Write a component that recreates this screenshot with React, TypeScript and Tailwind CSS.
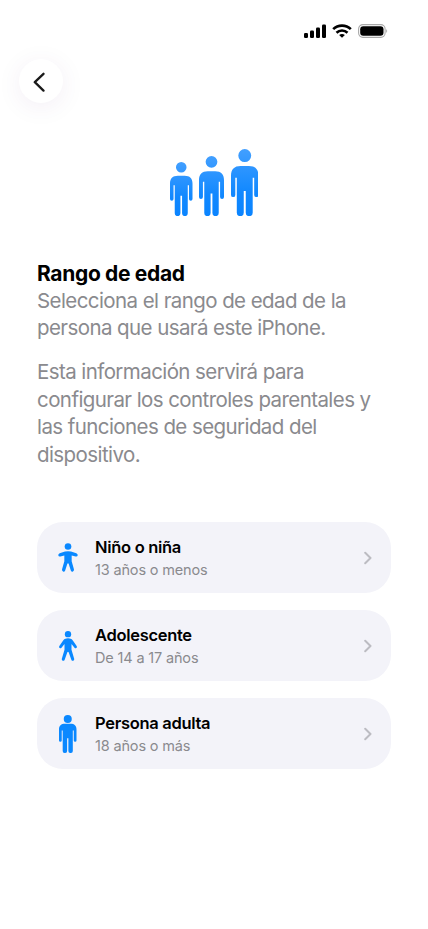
import type { ReactNode } from 'react';

interface AgeOption {
  id: string;
  title: string;
  subtitle: string;
  icon: ReactNode;
}

// Standing adult silhouette, shared by the hero and the last card.
const ADULT_BODY =
  'M29 51 H54 C73 51 83 61 83 80 V137 a6.5 6.5 0 0 1 -13 0 V86 h-4.500 V190 a10 10 0 0 1 -21 0 V125 h-6 V190 a10 10 0 0 1 -21 0 V86 h-4.500 V137 a6.5 6.5 0 0 1 -13 0 V80 C0 61 10 51 29 51 Z';

function HeroFigure({ className }: { className: string }) {
  return (
    <svg viewBox="0 0 83 200" preserveAspectRatio="none" className={className}>
      <g fill="url(#figureFade)">
        <path d={`M41.500 0 a19.500 19.500 0 0 1 0 39 a19.500 19.500 0 0 1 0 -39 Z ${ADULT_BODY}`} />
      </g>
    </svg>
  );
}

function ChildIcon() {
  return (
    <svg viewBox="0 0 60 86" className="w-5 h-[29px]" fill="#0a88ff">
      <circle cx="30" cy="10" r="10" />
      <path d="M5 30 Q0 32 1 37 Q2 41 7 40 L19 37 V54 L12 79 Q11.500 84 16 85.500 Q20 86 21.500 82 L28 62 Q30 58 32 62 L38.500 82 Q40 86 44 85.500 Q48.500 84 48 79 L41 54 V37 L53 40 Q58 41 59 37 Q60 32 55 30 L39 25 Q30 23 21 25 Z" />
    </svg>
  );
}

function TeenIcon() {
  return (
    <svg viewBox="0 0 54 90" className="w-[18px] h-[30px]" fill="#0a88ff">
      <circle cx="27" cy="9.500" r="9.500" />
      <path d="M17 24 Q27 20 37 24 Q40 26 42 29 L53 45 Q55 49 51.500 51 Q49 52.500 46.500 50 L37.500 39 V56 L45.500 83 Q46.500 88 42.500 89.500 Q38.500 90 37 86 L29 64 Q27 60 25 64 L17 86 Q15.500 90 11.500 89.500 Q7.500 88 8.500 83 L16.500 56 V39 L7.500 50 Q5 52.500 2.500 51 Q-1 49 1 45 L12 29 Q14 26 17 24 Z" />
    </svg>
  );
}

function AdultIcon() {
  return (
    <svg viewBox="0 0 83 182" className="w-[17.500px] h-[38px]" preserveAspectRatio="none" fill="#0a88ff">
      <circle cx="41.500" cy="19" r="19" />
      <path d={ADULT_BODY} transform="translate(0 -6) scale(1 0.938)" />
    </svg>
  );
}

const OPTIONS: AgeOption[] = [
  { id: 'child', title: 'Niño o niña', subtitle: '13 años o menos', icon: <ChildIcon /> },
  { id: 'teen', title: 'Adolescente', subtitle: 'De 14 a 17 años', icon: <TeenIcon /> },
  { id: 'adult', title: 'Persona adulta', subtitle: '18 años o más', icon: <AdultIcon /> },
];

function StatusBar() {
  return (
    <div className="flex h-[62px] items-center justify-end gap-[5px] pr-[39px] text-black">
      <svg viewBox="0 0 22 14" className="w-[22px] h-3.5" fill="currentColor">
        <rect x="0" y="9" width="4" height="5" rx="1.200" />
        <rect x="6" y="6.500" width="4" height="7.500" rx="1.200" />
        <rect x="12" y="3.500" width="4" height="10.500" rx="1.200" />
        <rect x="18" y="0.500" width="4" height="13.500" rx="1.200" />
      </svg>
      <svg viewBox="0 0 20 14" className="ml-px w-5 h-3.5" fill="none" stroke="currentColor" strokeWidth="2.600">
        <path d="M1.200 5.200 C6 0.400 14 0.400 18.800 5.200" />
        <path d="M4.500 8.700 C7.500 5.800 12.500 5.800 15.500 8.700" />
        <path d="M10 13.800 L7.100 11 Q10 8.800 12.900 11 Z" fill="currentColor" stroke="none" />
      </svg>
      <svg viewBox="0 0 30 14" className="ml-px mr-px w-[30px] h-3.5">
        <rect x="0.600" y="0.600" width="26.500" height="12.800" rx="4.300" fill="none" stroke="#a9a9a9" strokeWidth="1.100" />
        <rect x="2.200" y="2.200" width="23.300" height="9.600" rx="3" fill="currentColor" />
        <path d="M28.300 4.800 q1.700 2.200 0 4.400 Z" fill="#8d8d8d" />
      </svg>
    </div>
  );
}

export default function App() {
  return (
    <main className="min-h-[929px] w-[428px] overflow-hidden bg-white font-['Inter',sans-serif] text-black">
      <StatusBar />

      <div className="-mt-[3px] pl-[19px]">
        <button
          aria-label="Atrás"
          className="flex size-11 items-center justify-center rounded-full bg-white shadow-[0_4px_26px_rgba(90,30,120,0.07)]"
        >
          <svg viewBox="0 0 12 20" className="-ml-[5px] mt-px h-5 w-3" fill="none" stroke="#1a1a1a" strokeWidth="2.300" strokeLinecap="round" strokeLinejoin="round">
            <path d="M10.500 1.800 L1.800 10.200 L10.500 18.600" />
          </svg>
        </button>
      </div>

      {/* Three figures growing in height, feet on one line */}
      <div className="mt-[46px] flex h-[67px] items-end justify-center">
        <svg className="absolute size-0">
          <defs>
            <linearGradient id="figureFade" x1="0" y1="0" x2="0" y2="1">
              <stop offset="0%" stopColor="#429fff" />
              <stop offset="65%" stopColor="#1188ff" />
              <stop offset="100%" stopColor="#0a84ff" />
            </linearGradient>
          </defs>
        </svg>
        <HeroFigure className="h-[54px] w-[22.500px]" />
        <HeroFigure className="ml-[6.500px] h-[60px] w-[25px]" />
        <HeroFigure className="ml-[6.500px] h-[67px] w-[27.500px]" />
      </div>

      <section className="mt-11 pl-[37px] text-[20.500px] leading-[27.700px] text-[#8a8a8e]">
        <h1 className="text-[21px] leading-[27px] font-bold tracking-[-0.330px] text-black">Rango de edad</h1>
        <p className="-mt-[0.500px] tracking-[-0.580px]">
          Selecciona el rango de edad de la
          <br />
          persona que usará este iPhone.
        </p>
        <p className="mt-4 tracking-[-0.580px]">
          Esta información servirá para
          <br />
          configurar los controles parentales y
          <br />
          las funciones de seguridad del
          <br />
          dispositivo.
        </p>
      </section>

      <div className="mt-[53.300px] flex flex-col gap-[17px] px-[37px]">
        {OPTIONS.map(({ id, title, subtitle, icon }) => (
          <button key={id} className="flex h-[71px] w-full items-center rounded-[26px] bg-[#f3f3f9] pr-[19px] pl-[18px] text-left">
            <span className="flex w-[26px] shrink-0 justify-center">{icon}</span>
            <span className="ml-3.5 flex-1 pt-[1.500px]">
              <span className="block text-[16.500px] leading-[22px] font-semibold tracking-[-0.300px]">{title}</span>
              <span className="mt-px block text-[14.500px] leading-[22px] tracking-[-0.160px] text-[#8a8a8e]">{subtitle}</span>
            </span>
            <svg viewBox="0 0 8 14" className="h-3.5 w-2" fill="none" stroke="#bcbcc2" strokeWidth="2" strokeLinecap="round" strokeLinejoin="round">
              <path d="M1.200 1.800 L6.500 7 L1.200 12.200" />
            </svg>
          </button>
        ))}
      </div>
    </main>
  );
}
